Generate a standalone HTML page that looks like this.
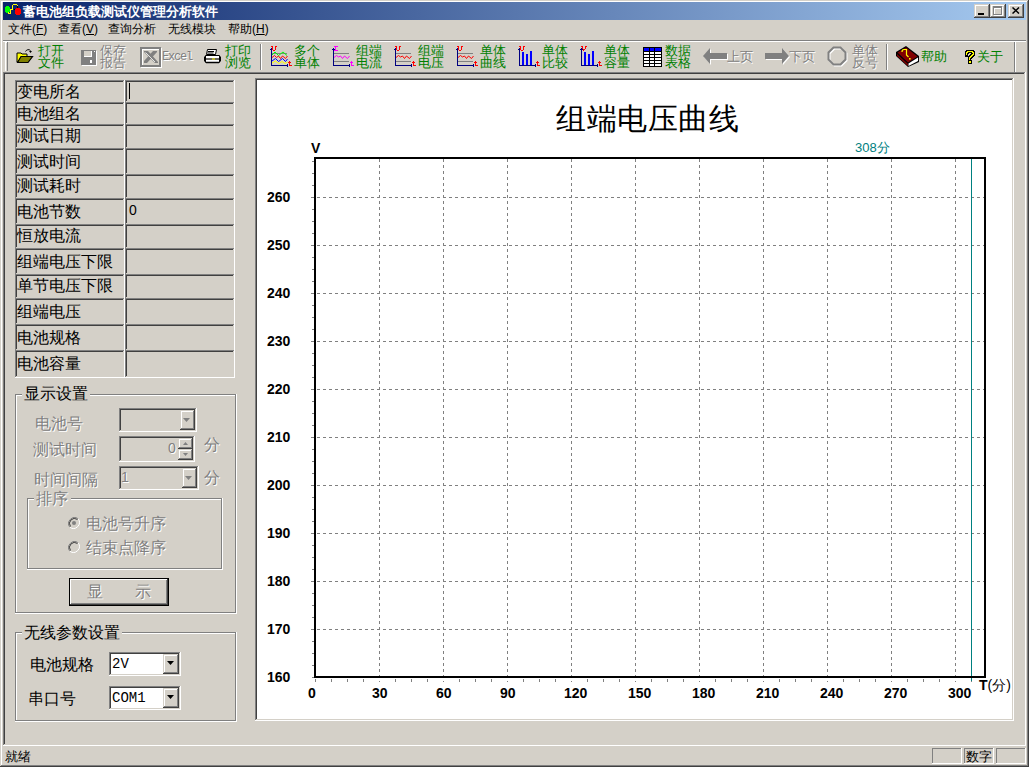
<!DOCTYPE html>
<html><head><meta charset="utf-8"><style>
*{box-sizing:border-box;margin:0;padding:0}
html,body{width:1030px;height:768px;overflow:hidden;background:#ffffff;font-family:"Liberation Sans",sans-serif;font-size:12px;color:#000}
.a{position:absolute}
.t{position:absolute;white-space:nowrap;line-height:1}
.g{color:#008000}
.dis{color:#808080;text-shadow:1px 1px 0 #fff}
.r{position:absolute}
</style></head><body>
<div class="r" style="left:0;top:0;width:1029px;height:767px;background:#d4d0c8"></div>
<div class="r" style="left:0px;top:0px;width:1028px;height:1px;background:#d4d0c8;"></div>
<div class="r" style="left:1px;top:1px;width:1026px;height:1px;background:#fff;"></div>
<div class="r" style="left:1px;top:1px;width:1px;height:764px;background:#fff;"></div>
<div class="r" style="left:1028px;top:0px;width:1px;height:767px;background:#404040;"></div>
<div class="r" style="left:1027px;top:1px;width:1px;height:765px;background:#808080;"></div>
<div class="r" style="left:0px;top:766px;width:1029px;height:1px;background:#404040;"></div>
<div class="r" style="left:1px;top:765px;width:1027px;height:1px;background:#808080;"></div>
<div class="r" style="left:3px;top:2px;width:1023px;height:18px;background:linear-gradient(to right,#0a246a,#a6caf0)"></div>
<svg class="a" style="left:0px;top:0px" width="24" height="20" viewBox="0 0 24 20" shape-rendering="crispEdges">
<rect x="6" y="6" width="3" height="7" fill="#00ff00"/><rect x="5" y="7" width="5" height="5" fill="#00ff00"/>
<path d="M7 13h1v1h3v-4h2v-5h4v3h1v-3h-1v-1h-4v1h-1v4h-2v4h-1v-1h-1z" fill="#ffff00"/>
<path d="M14 9h1v1h-1z" fill="#000"/><path d="M17 6h1v2h-1z" fill="#000"/>
<rect x="16" y="8" width="4" height="7" fill="#ff0000"/><rect x="15" y="9" width="6" height="5" fill="#ff0000"/>
</svg>
<div class="t " style="left:23px;top:5px;color:#fff;font-weight:bold;font-size:13px">蓄电池组负载测试仪管理分析软件</div>
<div class="r" style="left:974px;top:4px;width:16px;height:14px;background:#d4d0c8;"></div>
<div class="r" style="left:974px;top:4px;width:16px;height:1px;background:#d4d0c8;"></div>
<div class="r" style="left:974px;top:4px;width:1px;height:14px;background:#d4d0c8;"></div>
<div class="r" style="left:974px;top:17px;width:16px;height:1px;background:#404040;"></div>
<div class="r" style="left:989px;top:4px;width:1px;height:14px;background:#404040;"></div>
<div class="r" style="left:975px;top:5px;width:14px;height:1px;background:#fff;"></div>
<div class="r" style="left:975px;top:5px;width:1px;height:12px;background:#fff;"></div>
<div class="r" style="left:975px;top:16px;width:14px;height:1px;background:#808080;"></div>
<div class="r" style="left:988px;top:5px;width:1px;height:12px;background:#808080;"></div>
<div class="r" style="left:990px;top:4px;width:16px;height:14px;background:#d4d0c8;"></div>
<div class="r" style="left:990px;top:4px;width:16px;height:1px;background:#d4d0c8;"></div>
<div class="r" style="left:990px;top:4px;width:1px;height:14px;background:#d4d0c8;"></div>
<div class="r" style="left:990px;top:17px;width:16px;height:1px;background:#404040;"></div>
<div class="r" style="left:1005px;top:4px;width:1px;height:14px;background:#404040;"></div>
<div class="r" style="left:991px;top:5px;width:14px;height:1px;background:#fff;"></div>
<div class="r" style="left:991px;top:5px;width:1px;height:12px;background:#fff;"></div>
<div class="r" style="left:991px;top:16px;width:14px;height:1px;background:#808080;"></div>
<div class="r" style="left:1004px;top:5px;width:1px;height:12px;background:#808080;"></div>
<div class="r" style="left:1008px;top:4px;width:16px;height:14px;background:#d4d0c8;"></div>
<div class="r" style="left:1008px;top:4px;width:16px;height:1px;background:#d4d0c8;"></div>
<div class="r" style="left:1008px;top:4px;width:1px;height:14px;background:#d4d0c8;"></div>
<div class="r" style="left:1008px;top:17px;width:16px;height:1px;background:#404040;"></div>
<div class="r" style="left:1023px;top:4px;width:1px;height:14px;background:#404040;"></div>
<div class="r" style="left:1009px;top:5px;width:14px;height:1px;background:#fff;"></div>
<div class="r" style="left:1009px;top:5px;width:1px;height:12px;background:#fff;"></div>
<div class="r" style="left:1009px;top:16px;width:14px;height:1px;background:#808080;"></div>
<div class="r" style="left:1022px;top:5px;width:1px;height:12px;background:#808080;"></div>
<div class="r" style="left:978px;top:13px;width:6px;height:2px;background:#000;"></div>
<div class="r" style="left:994px;top:7px;width:9px;height:9px;border:1px solid #fff;border-top-width:2px"></div>
<div class="r" style="left:993px;top:6px;width:9px;height:9px;border:1px solid #808080;border-top-width:2px"></div>
<svg class="a" style="left:1012px;top:7px" width="8" height="7" viewBox="0 0 8 7"><path d="M0.5 0.5 L7 6.5 M7 0.5 L0.5 6.5" stroke="#000" stroke-width="1.5"/></svg>
<div class="t " style="left:8px;top:23px;">文件(<u>F</u>)</div>
<div class="t " style="left:58px;top:23px;">查看(<u>V</u>)</div>
<div class="t " style="left:108px;top:23px;">查询分析</div>
<div class="t " style="left:168px;top:23px;">无线模块</div>
<div class="t " style="left:228px;top:23px;">帮助(<u>H</u>)</div>
<div class="r" style="left:3px;top:40px;width:1023px;height:1px;background:#808080;"></div>
<div class="r" style="left:3px;top:41px;width:1023px;height:1px;background:#fff;"></div>
<div class="r" style="left:5px;top:42px;width:1px;height:29px;background:#fff;"></div>
<div class="r" style="left:7px;top:42px;width:1px;height:29px;background:#808080;"></div>
<div class="r" style="left:5px;top:42px;width:2px;height:1px;background:#fff;"></div>
<div class="r" style="left:1014px;top:42px;width:1px;height:30px;background:#808080;"></div>
<div class="r" style="left:1015px;top:42px;width:1px;height:30px;background:#fff;"></div>
<div class="r" style="left:260px;top:44px;width:1px;height:26px;background:#808080;"></div>
<div class="r" style="left:261px;top:44px;width:1px;height:26px;background:#fff;"></div>
<div class="r" style="left:886px;top:44px;width:1px;height:26px;background:#808080;"></div>
<div class="r" style="left:887px;top:44px;width:1px;height:26px;background:#fff;"></div>
<svg class="a" style="left:16px;top:48px" width="18" height="17" viewBox="0 0 18 17" >
<path d="M9.5 3.5 C10.5 1.5 13 1 14.5 2.5" stroke="#000" stroke-width="1" fill="none"/>
<path d="M13 3h3l-1.5 2z" fill="#000"/>
<path d="M1 5h4l1 1h5v3H5L2 14H1z" fill="#ffff00" stroke="#000" stroke-width="1" stroke-linejoin="miter"/>
<path d="M1.5 14.5 L5 8.5 H16.5 L12 14.5 Z" fill="#808000" stroke="#000" stroke-width="1.2"/>
</svg>
<div class="t g" style="left:38px;top:45px;font-size:13px;line-height:12px">打开<br>文件</div>
<svg class="a" style="left:80px;top:49px" width="17" height="17" viewBox="0 0 17 17" shape-rendering="crispEdges">
<rect x="2" y="2" width="15" height="15" fill="#fff"/>
<rect x="1" y="1" width="15" height="15" fill="#808080"/>
<rect x="4" y="2" width="8" height="6" fill="#fff"/>
<rect x="4" y="2" width="7" height="5" fill="#d4d0c8"/>
<rect x="14" y="2" width="1" height="1" fill="#fff"/>
<rect x="10" y="11" width="2" height="3" fill="#fff"/>
</svg>
<div class="t dis" style="left:100px;top:45px;font-size:13px;line-height:12px">保存<br>报告</div>
<svg class="a" style="left:139px;top:46px" width="24" height="23" viewBox="0 0 24 23" shape-rendering="geometricPrecision">
<rect x="2" y="2" width="21" height="20" fill="#fff"/>
<rect x="1" y="1" width="21" height="20" fill="#808080"/>
<rect x="3" y="3" width="17" height="16" fill="#fff"/>
<rect x="4" y="4" width="16" height="15" fill="#d4d0c8"/>
<path d="M5 5h4l10 11v1h-3L5 6z M5 17v-2l9-10h4v1L8 17z" fill="#808080"/>
<path d="M6.5 6.5 L16 16" stroke="#fff" stroke-width="0.8"/>
</svg>
<div class="t dis" style="left:162px;top:51px;font-size:12px;font-family:Liberation Mono,monospace;letter-spacing:-1.2px">Excel</div>
<svg class="a" style="left:203px;top:48px" width="20" height="18" viewBox="0 0 20 18" >
<path d="M4.5 1.5h9l-1 5h-9z" fill="#fff" stroke="#000"/>
<path d="M5 3.5h6M4.5 5h6" stroke="#000"/>
<path d="M2.5 7.5h14v7h-14z" fill="#fff" stroke="#000"/>
<path d="M1.5 8.5v5M17.5 8.5v5" stroke="#000"/>
<rect x="3" y="10" width="13" height="2" fill="#000"/>
<rect x="3" y="10.5" width="13" height="1" fill="#d4d0c8"/>
<rect x="9" y="10.5" width="3" height="1" fill="#ffff00"/>
<path d="M3 14.5h13" stroke="#000" stroke-width="1.5"/>
</svg>
<div class="t g" style="left:225px;top:45px;font-size:13px;line-height:12px">打印<br>浏览</div>
<svg class="a" style="left:266px;top:44px" width="30" height="26" viewBox="266 44 30 26"><g shape-rendering="crispEdges" fill="none"><path d="M271.5 48V65.5H288" stroke="#000080"/><path d="M270 49.5h3M287.5 64v3" stroke="#000080"/><path d="M271 46.5h2M275 46.5h2M272.5 47v3M275.5 47v3M273 50.5h2" stroke="#ff0000"/><path d="M289.5 61v5M288 62.5h3M289.5 65.5h2" stroke="#ff0000"/></g><path d="M272 53.5H287" stroke="#808080" shape-rendering="crispEdges"/><polyline points="272,55 275,52 278.5,55.5 283,52 287,55.5" stroke="#00ff00" stroke-width="1.0" fill="none"/><polyline points="272,57.5 274.5,55.5 276.5,57.5 278.5,56 280.5,58.5 282.5,56 285.5,58.5 287.5,56" stroke="#ff0000" stroke-width="1.0" fill="none"/><polyline points="272,61 275.5,58.5 278.5,61.5 282.5,58.5 285.5,61.5 287.5,59" stroke="#0000ff" stroke-width="1.0" fill="none"/><polyline points="272,63 275.5,61 279,63.5 282,61.5 285,63.5 287.5,62" stroke="#ffff00" stroke-width="1.0" fill="none"/></svg>
<div class="t g" style="left:294px;top:45px;font-size:13px;line-height:12px">多个<br>单体</div>
<svg class="a" style="left:328px;top:44px" width="30" height="26" viewBox="266 44 30 26"><g shape-rendering="crispEdges" fill="none"><path d="M271.5 48V65.5H288" stroke="#000080"/><path d="M270 49.5h3M287.5 64v3" stroke="#000080"/><path d="M272 46.5h4M273.5 47v4M272 50.5h4" stroke="#ff00ff"/><path d="M289.5 61v5M288 62.5h3M289.5 65.5h2" stroke="#ff00ff"/></g><path d="M272 53.5H287M272 61.5H287" stroke="#808080" shape-rendering="crispEdges"/><polyline points="272,57.5 274.5,55.5 276.5,57 278.5,56 280.5,58.5 282.5,56 285.5,58.5 287.5,56" stroke="#ff00ff" stroke-width="1.0" fill="none"/></svg>
<div class="t g" style="left:356px;top:45px;font-size:13px;line-height:12px">组端<br>电流</div>
<svg class="a" style="left:390px;top:44px" width="30" height="26" viewBox="266 44 30 26"><g shape-rendering="crispEdges" fill="none"><path d="M271.5 48V65.5H288" stroke="#000080"/><path d="M270 49.5h3M287.5 64v3" stroke="#000080"/><path d="M271 46.5h2M275 46.5h2M272.5 47v3M275.5 47v3M273 50.5h2" stroke="#ff0000"/><path d="M289.5 61v5M288 62.5h3M289.5 65.5h2" stroke="#ff0000"/></g><path d="M272 53.5H287M272 61.5H287" stroke="#808080" shape-rendering="crispEdges"/><polyline points="272,57.5 274.5,55.5 276.5,57 278.5,56 280.5,58.5 282.5,56 285.5,58.5 287.5,56" stroke="#ff0000" stroke-width="1.0" fill="none"/></svg>
<div class="t g" style="left:418px;top:45px;font-size:13px;line-height:12px">组端<br>电压</div>
<svg class="a" style="left:452px;top:44px" width="30" height="26" viewBox="266 44 30 26"><g shape-rendering="crispEdges" fill="none"><path d="M271.5 48V65.5H288" stroke="#000080"/><path d="M270 49.5h3M287.5 64v3" stroke="#000080"/><path d="M271 46.5h2M275 46.5h2M272.5 47v3M275.5 47v3M273 50.5h2" stroke="#ff0000"/><path d="M289.5 61v5M288 62.5h3M289.5 65.5h2" stroke="#ff0000"/></g><path d="M272 53.5H287M272 61.5H287" stroke="#808080" shape-rendering="crispEdges"/><polyline points="272,57.5 274.5,55.5 276.5,57 278.5,56 280.5,58.5 282.5,56 285.5,58.5 287.5,56" stroke="#ff0000" stroke-width="1.0" fill="none"/></svg>
<div class="t g" style="left:480px;top:45px;font-size:13px;line-height:12px">单体<br>曲线</div>
<svg class="a" style="left:514px;top:44px" width="30" height="26" viewBox="266 44 30 26"><g shape-rendering="crispEdges" fill="none"><path d="M271.5 48V65.5H288" stroke="#000080"/><path d="M270 49.5h3M287.5 64v3" stroke="#000080"/><path d="M271 46.5h2M275 46.5h2M272.5 47v3M275.5 47v3M273 50.5h2" stroke="#ff0000"/><path d="M289.5 61v5M288 62.5h3M289.5 65.5h2" stroke="#ff0000"/></g><g shape-rendering="crispEdges"><rect x="274" y="52" width="2" height="13" fill="#0000ff"/><rect x="278" y="54" width="2" height="11" fill="#0000ff"/><rect x="282" y="51" width="2" height="14" fill="#0000ff"/></g></svg>
<div class="t g" style="left:542px;top:45px;font-size:13px;line-height:12px">单体<br>比较</div>
<svg class="a" style="left:576px;top:44px" width="30" height="26" viewBox="266 44 30 26"><g shape-rendering="crispEdges" fill="none"><path d="M271.5 48V65.5H288" stroke="#000080"/><path d="M270 49.5h3M287.5 64v3" stroke="#000080"/><path d="M271 46.5h2M275 46.5h2M272.5 47v2M275.5 47v2M273 49.5h2M273.5 50v1" stroke="#ff0000"/><path d="M289.5 61v5M288 62.5h3M289.5 65.5h2" stroke="#ff0000"/></g><g shape-rendering="crispEdges"><rect x="274" y="52" width="2" height="13" fill="#0000ff"/><rect x="278" y="54" width="2" height="11" fill="#0000ff"/><rect x="282" y="51" width="2" height="14" fill="#0000ff"/></g></svg>
<div class="t g" style="left:604px;top:45px;font-size:13px;line-height:12px">单体<br>容量</div>
<svg class="a" style="left:643px;top:47px" width="19" height="20" viewBox="0 0 19 20" shape-rendering="crispEdges"><rect x="0" y="0" width="19" height="20" fill="#000"/><rect x="1" y="1" width="5" height="3" fill="#0000ff"/><rect x="7" y="1" width="4" height="3" fill="#0000ff"/><rect x="12" y="1" width="6" height="3" fill="#0000ff"/><rect x="1" y="5" width="5" height="2" fill="#fff"/><rect x="7" y="5" width="4" height="2" fill="#fff"/><rect x="12" y="5" width="6" height="2" fill="#fff"/><rect x="1" y="8" width="5" height="2" fill="#fff"/><rect x="7" y="8" width="4" height="2" fill="#fff"/><rect x="12" y="8" width="6" height="2" fill="#fff"/><rect x="1" y="11" width="5" height="2" fill="#fff"/><rect x="7" y="11" width="4" height="2" fill="#fff"/><rect x="12" y="11" width="6" height="2" fill="#fff"/><rect x="1" y="14" width="5" height="2" fill="#fff"/><rect x="7" y="14" width="4" height="2" fill="#fff"/><rect x="12" y="14" width="6" height="2" fill="#fff"/><rect x="1" y="17" width="5" height="2" fill="#fff"/><rect x="7" y="17" width="4" height="2" fill="#fff"/><rect x="12" y="17" width="6" height="2" fill="#fff"/></svg>
<div class="t g" style="left:665px;top:45px;font-size:13px;line-height:12px">数据<br>表格</div>
<svg class="a" style="left:702px;top:47px" width="27" height="19" viewBox="0 0 27 19" >
<path d="M9 2 L9 7 H26 V13 H9 V18 L2 10 Z" fill="#fff"/>
<path d="M8 1 L8 6 H25 V12 H8 V17 L1 9 Z" fill="#808080"/>
</svg>
<div class="t dis" style="left:727px;top:50px;font-size:13px">上页</div>
<svg class="a" style="left:764px;top:47px" width="27" height="19" viewBox="0 0 27 19" >
<path d="M19 2 L19 7 H2 V13 H19 V18 L26 10 Z" fill="#fff"/>
<path d="M18 1 L18 6 H1 V12 H18 V17 L25 9 Z" fill="#808080"/>
</svg>
<div class="t dis" style="left:789px;top:50px;font-size:13px">下页</div>
<svg class="a" style="left:827px;top:46px" width="22" height="22" viewBox="0 0 22 22" >
<path d="M7.5 2.5h7l5 5v7l-5 5h-7l-5-5v-7z" stroke="#fff" stroke-width="2" fill="none"/>
<path d="M6.5 1.5h7l5 5v7l-5 5h-7l-5-5v-7z" stroke="#808080" stroke-width="2" fill="none"/>
</svg>
<div class="t dis" style="left:852px;top:45px;font-size:13px;line-height:12px">单体<br>反号</div>
<svg class="a" style="left:895px;top:45px" width="25" height="23" viewBox="0 0 25 23" >
<path d="M1 7 L11 1 L24 11 L24 17 L13 22 L1 11 Z" fill="#000"/>
<path d="M2.5 7.5 L11 2.5 L22.5 11.5 L13 17.5 Z" fill="#800000"/>
<path d="M2 9 L13 19 L13 21 L2 11 Z" fill="#800000"/>
<path d="M13.5 18.5 L23 12.5 V16 L13.5 21 Z" fill="#fff"/>
<path d="M7 7 Q7 4.5 9 4.5 H11.5 V10 L13.5 12" stroke="#ffff00" stroke-width="1.2" fill="none"/>
<rect x="14" y="13" width="1.6" height="1.6" fill="#ffff00"/>
</svg>
<div class="t g" style="left:921px;top:50px;font-size:13px">帮助</div>
<svg class="a" style="left:960px;top:46px" width="20" height="20" viewBox="960 46 20 20" shape-rendering="crispEdges">
<path d="M966.5 55V52.5H967.5V51.5H972.5V52.5H973.5V54.5H972.5V55.5H971.5V56.5H970.5V57.5H969.5V60" stroke="#000" stroke-width="3" stroke-linecap="square" stroke-linejoin="miter" fill="none"/>
<rect x="968" y="60" width="4" height="4" fill="#000"/>
<path d="M966.5 55V52.5H967.5V51.5H972.5V52.5H973.5V54.5H972.5V55.5H971.5V56.5H970.5V57.5H969.5V60" stroke="#ffff00" stroke-width="1" fill="none"/>
<rect x="969" y="61" width="2" height="2" fill="#ffff00"/>
</svg>
<div class="t g" style="left:977px;top:50px;font-size:13px">关于</div>
<div class="r" style="left:3px;top:72px;width:1022px;height:1px;background:#808080;"></div>
<div class="r" style="left:3px;top:72px;width:1px;height:673px;background:#808080;"></div>
<div class="r" style="left:4px;top:73px;width:1020px;height:1px;background:#404040;"></div>
<div class="r" style="left:4px;top:73px;width:1px;height:671px;background:#404040;"></div>
<div class="r" style="left:3px;top:745px;width:1023px;height:1px;background:#fff;"></div>
<div class="r" style="left:1025px;top:72px;width:1px;height:674px;background:#fff;"></div>
<div class="r" style="left:15px;top:80px;width:110px;height:1px;background:#808080;"></div>
<div class="r" style="left:15px;top:80px;width:1px;height:23px;background:#808080;"></div>
<div class="r" style="left:15px;top:102px;width:110px;height:1px;background:#fff;"></div>
<div class="r" style="left:124px;top:80px;width:1px;height:23px;background:#fff;"></div>
<div class="r" style="left:16px;top:81px;width:108px;height:1px;background:#404040;"></div>
<div class="r" style="left:16px;top:81px;width:1px;height:21px;background:#404040;"></div>
<div class="r" style="left:16px;top:101px;width:108px;height:1px;background:#d4d0c8;"></div>
<div class="r" style="left:123px;top:81px;width:1px;height:21px;background:#d4d0c8;"></div>
<div class="r" style="left:125px;top:80px;width:110px;height:1px;background:#808080;"></div>
<div class="r" style="left:125px;top:80px;width:1px;height:23px;background:#808080;"></div>
<div class="r" style="left:125px;top:102px;width:110px;height:1px;background:#fff;"></div>
<div class="r" style="left:234px;top:80px;width:1px;height:23px;background:#fff;"></div>
<div class="r" style="left:126px;top:81px;width:108px;height:1px;background:#404040;"></div>
<div class="r" style="left:126px;top:81px;width:1px;height:21px;background:#404040;"></div>
<div class="r" style="left:126px;top:101px;width:108px;height:1px;background:#d4d0c8;"></div>
<div class="r" style="left:233px;top:81px;width:1px;height:21px;background:#d4d0c8;"></div>
<div class="r" style="left:15px;top:102px;width:110px;height:1px;background:#808080;"></div>
<div class="r" style="left:15px;top:102px;width:1px;height:23px;background:#808080;"></div>
<div class="r" style="left:15px;top:124px;width:110px;height:1px;background:#fff;"></div>
<div class="r" style="left:124px;top:102px;width:1px;height:23px;background:#fff;"></div>
<div class="r" style="left:16px;top:103px;width:108px;height:1px;background:#404040;"></div>
<div class="r" style="left:16px;top:103px;width:1px;height:21px;background:#404040;"></div>
<div class="r" style="left:16px;top:123px;width:108px;height:1px;background:#d4d0c8;"></div>
<div class="r" style="left:123px;top:103px;width:1px;height:21px;background:#d4d0c8;"></div>
<div class="r" style="left:125px;top:102px;width:110px;height:1px;background:#808080;"></div>
<div class="r" style="left:125px;top:102px;width:1px;height:23px;background:#808080;"></div>
<div class="r" style="left:125px;top:124px;width:110px;height:1px;background:#fff;"></div>
<div class="r" style="left:234px;top:102px;width:1px;height:23px;background:#fff;"></div>
<div class="r" style="left:126px;top:103px;width:108px;height:1px;background:#404040;"></div>
<div class="r" style="left:126px;top:103px;width:1px;height:21px;background:#404040;"></div>
<div class="r" style="left:126px;top:123px;width:108px;height:1px;background:#d4d0c8;"></div>
<div class="r" style="left:233px;top:103px;width:1px;height:21px;background:#d4d0c8;"></div>
<div class="r" style="left:15px;top:124px;width:110px;height:1px;background:#808080;"></div>
<div class="r" style="left:15px;top:124px;width:1px;height:25px;background:#808080;"></div>
<div class="r" style="left:15px;top:148px;width:110px;height:1px;background:#fff;"></div>
<div class="r" style="left:124px;top:124px;width:1px;height:25px;background:#fff;"></div>
<div class="r" style="left:16px;top:125px;width:108px;height:1px;background:#404040;"></div>
<div class="r" style="left:16px;top:125px;width:1px;height:23px;background:#404040;"></div>
<div class="r" style="left:16px;top:147px;width:108px;height:1px;background:#d4d0c8;"></div>
<div class="r" style="left:123px;top:125px;width:1px;height:23px;background:#d4d0c8;"></div>
<div class="r" style="left:125px;top:124px;width:110px;height:1px;background:#808080;"></div>
<div class="r" style="left:125px;top:124px;width:1px;height:25px;background:#808080;"></div>
<div class="r" style="left:125px;top:148px;width:110px;height:1px;background:#fff;"></div>
<div class="r" style="left:234px;top:124px;width:1px;height:25px;background:#fff;"></div>
<div class="r" style="left:126px;top:125px;width:108px;height:1px;background:#404040;"></div>
<div class="r" style="left:126px;top:125px;width:1px;height:23px;background:#404040;"></div>
<div class="r" style="left:126px;top:147px;width:108px;height:1px;background:#d4d0c8;"></div>
<div class="r" style="left:233px;top:125px;width:1px;height:23px;background:#d4d0c8;"></div>
<div class="r" style="left:15px;top:148px;width:110px;height:1px;background:#808080;"></div>
<div class="r" style="left:15px;top:148px;width:1px;height:27px;background:#808080;"></div>
<div class="r" style="left:15px;top:174px;width:110px;height:1px;background:#fff;"></div>
<div class="r" style="left:124px;top:148px;width:1px;height:27px;background:#fff;"></div>
<div class="r" style="left:16px;top:149px;width:108px;height:1px;background:#404040;"></div>
<div class="r" style="left:16px;top:149px;width:1px;height:25px;background:#404040;"></div>
<div class="r" style="left:16px;top:173px;width:108px;height:1px;background:#d4d0c8;"></div>
<div class="r" style="left:123px;top:149px;width:1px;height:25px;background:#d4d0c8;"></div>
<div class="r" style="left:125px;top:148px;width:110px;height:1px;background:#808080;"></div>
<div class="r" style="left:125px;top:148px;width:1px;height:27px;background:#808080;"></div>
<div class="r" style="left:125px;top:174px;width:110px;height:1px;background:#fff;"></div>
<div class="r" style="left:234px;top:148px;width:1px;height:27px;background:#fff;"></div>
<div class="r" style="left:126px;top:149px;width:108px;height:1px;background:#404040;"></div>
<div class="r" style="left:126px;top:149px;width:1px;height:25px;background:#404040;"></div>
<div class="r" style="left:126px;top:173px;width:108px;height:1px;background:#d4d0c8;"></div>
<div class="r" style="left:233px;top:149px;width:1px;height:25px;background:#d4d0c8;"></div>
<div class="r" style="left:15px;top:174px;width:110px;height:1px;background:#808080;"></div>
<div class="r" style="left:15px;top:174px;width:1px;height:25px;background:#808080;"></div>
<div class="r" style="left:15px;top:198px;width:110px;height:1px;background:#fff;"></div>
<div class="r" style="left:124px;top:174px;width:1px;height:25px;background:#fff;"></div>
<div class="r" style="left:16px;top:175px;width:108px;height:1px;background:#404040;"></div>
<div class="r" style="left:16px;top:175px;width:1px;height:23px;background:#404040;"></div>
<div class="r" style="left:16px;top:197px;width:108px;height:1px;background:#d4d0c8;"></div>
<div class="r" style="left:123px;top:175px;width:1px;height:23px;background:#d4d0c8;"></div>
<div class="r" style="left:125px;top:174px;width:110px;height:1px;background:#808080;"></div>
<div class="r" style="left:125px;top:174px;width:1px;height:25px;background:#808080;"></div>
<div class="r" style="left:125px;top:198px;width:110px;height:1px;background:#fff;"></div>
<div class="r" style="left:234px;top:174px;width:1px;height:25px;background:#fff;"></div>
<div class="r" style="left:126px;top:175px;width:108px;height:1px;background:#404040;"></div>
<div class="r" style="left:126px;top:175px;width:1px;height:23px;background:#404040;"></div>
<div class="r" style="left:126px;top:197px;width:108px;height:1px;background:#d4d0c8;"></div>
<div class="r" style="left:233px;top:175px;width:1px;height:23px;background:#d4d0c8;"></div>
<div class="r" style="left:15px;top:198px;width:110px;height:1px;background:#808080;"></div>
<div class="r" style="left:15px;top:198px;width:1px;height:27px;background:#808080;"></div>
<div class="r" style="left:15px;top:224px;width:110px;height:1px;background:#fff;"></div>
<div class="r" style="left:124px;top:198px;width:1px;height:27px;background:#fff;"></div>
<div class="r" style="left:16px;top:199px;width:108px;height:1px;background:#404040;"></div>
<div class="r" style="left:16px;top:199px;width:1px;height:25px;background:#404040;"></div>
<div class="r" style="left:16px;top:223px;width:108px;height:1px;background:#d4d0c8;"></div>
<div class="r" style="left:123px;top:199px;width:1px;height:25px;background:#d4d0c8;"></div>
<div class="r" style="left:125px;top:198px;width:110px;height:1px;background:#808080;"></div>
<div class="r" style="left:125px;top:198px;width:1px;height:27px;background:#808080;"></div>
<div class="r" style="left:125px;top:224px;width:110px;height:1px;background:#fff;"></div>
<div class="r" style="left:234px;top:198px;width:1px;height:27px;background:#fff;"></div>
<div class="r" style="left:126px;top:199px;width:108px;height:1px;background:#404040;"></div>
<div class="r" style="left:126px;top:199px;width:1px;height:25px;background:#404040;"></div>
<div class="r" style="left:126px;top:223px;width:108px;height:1px;background:#d4d0c8;"></div>
<div class="r" style="left:233px;top:199px;width:1px;height:25px;background:#d4d0c8;"></div>
<div class="r" style="left:15px;top:224px;width:110px;height:1px;background:#808080;"></div>
<div class="r" style="left:15px;top:224px;width:1px;height:25px;background:#808080;"></div>
<div class="r" style="left:15px;top:248px;width:110px;height:1px;background:#fff;"></div>
<div class="r" style="left:124px;top:224px;width:1px;height:25px;background:#fff;"></div>
<div class="r" style="left:16px;top:225px;width:108px;height:1px;background:#404040;"></div>
<div class="r" style="left:16px;top:225px;width:1px;height:23px;background:#404040;"></div>
<div class="r" style="left:16px;top:247px;width:108px;height:1px;background:#d4d0c8;"></div>
<div class="r" style="left:123px;top:225px;width:1px;height:23px;background:#d4d0c8;"></div>
<div class="r" style="left:125px;top:224px;width:110px;height:1px;background:#808080;"></div>
<div class="r" style="left:125px;top:224px;width:1px;height:25px;background:#808080;"></div>
<div class="r" style="left:125px;top:248px;width:110px;height:1px;background:#fff;"></div>
<div class="r" style="left:234px;top:224px;width:1px;height:25px;background:#fff;"></div>
<div class="r" style="left:126px;top:225px;width:108px;height:1px;background:#404040;"></div>
<div class="r" style="left:126px;top:225px;width:1px;height:23px;background:#404040;"></div>
<div class="r" style="left:126px;top:247px;width:108px;height:1px;background:#d4d0c8;"></div>
<div class="r" style="left:233px;top:225px;width:1px;height:23px;background:#d4d0c8;"></div>
<div class="r" style="left:15px;top:248px;width:110px;height:1px;background:#808080;"></div>
<div class="r" style="left:15px;top:248px;width:1px;height:27px;background:#808080;"></div>
<div class="r" style="left:15px;top:274px;width:110px;height:1px;background:#fff;"></div>
<div class="r" style="left:124px;top:248px;width:1px;height:27px;background:#fff;"></div>
<div class="r" style="left:16px;top:249px;width:108px;height:1px;background:#404040;"></div>
<div class="r" style="left:16px;top:249px;width:1px;height:25px;background:#404040;"></div>
<div class="r" style="left:16px;top:273px;width:108px;height:1px;background:#d4d0c8;"></div>
<div class="r" style="left:123px;top:249px;width:1px;height:25px;background:#d4d0c8;"></div>
<div class="r" style="left:125px;top:248px;width:110px;height:1px;background:#808080;"></div>
<div class="r" style="left:125px;top:248px;width:1px;height:27px;background:#808080;"></div>
<div class="r" style="left:125px;top:274px;width:110px;height:1px;background:#fff;"></div>
<div class="r" style="left:234px;top:248px;width:1px;height:27px;background:#fff;"></div>
<div class="r" style="left:126px;top:249px;width:108px;height:1px;background:#404040;"></div>
<div class="r" style="left:126px;top:249px;width:1px;height:25px;background:#404040;"></div>
<div class="r" style="left:126px;top:273px;width:108px;height:1px;background:#d4d0c8;"></div>
<div class="r" style="left:233px;top:249px;width:1px;height:25px;background:#d4d0c8;"></div>
<div class="r" style="left:15px;top:274px;width:110px;height:1px;background:#808080;"></div>
<div class="r" style="left:15px;top:274px;width:1px;height:25px;background:#808080;"></div>
<div class="r" style="left:15px;top:298px;width:110px;height:1px;background:#fff;"></div>
<div class="r" style="left:124px;top:274px;width:1px;height:25px;background:#fff;"></div>
<div class="r" style="left:16px;top:275px;width:108px;height:1px;background:#404040;"></div>
<div class="r" style="left:16px;top:275px;width:1px;height:23px;background:#404040;"></div>
<div class="r" style="left:16px;top:297px;width:108px;height:1px;background:#d4d0c8;"></div>
<div class="r" style="left:123px;top:275px;width:1px;height:23px;background:#d4d0c8;"></div>
<div class="r" style="left:125px;top:274px;width:110px;height:1px;background:#808080;"></div>
<div class="r" style="left:125px;top:274px;width:1px;height:25px;background:#808080;"></div>
<div class="r" style="left:125px;top:298px;width:110px;height:1px;background:#fff;"></div>
<div class="r" style="left:234px;top:274px;width:1px;height:25px;background:#fff;"></div>
<div class="r" style="left:126px;top:275px;width:108px;height:1px;background:#404040;"></div>
<div class="r" style="left:126px;top:275px;width:1px;height:23px;background:#404040;"></div>
<div class="r" style="left:126px;top:297px;width:108px;height:1px;background:#d4d0c8;"></div>
<div class="r" style="left:233px;top:275px;width:1px;height:23px;background:#d4d0c8;"></div>
<div class="r" style="left:15px;top:298px;width:110px;height:1px;background:#808080;"></div>
<div class="r" style="left:15px;top:298px;width:1px;height:27px;background:#808080;"></div>
<div class="r" style="left:15px;top:324px;width:110px;height:1px;background:#fff;"></div>
<div class="r" style="left:124px;top:298px;width:1px;height:27px;background:#fff;"></div>
<div class="r" style="left:16px;top:299px;width:108px;height:1px;background:#404040;"></div>
<div class="r" style="left:16px;top:299px;width:1px;height:25px;background:#404040;"></div>
<div class="r" style="left:16px;top:323px;width:108px;height:1px;background:#d4d0c8;"></div>
<div class="r" style="left:123px;top:299px;width:1px;height:25px;background:#d4d0c8;"></div>
<div class="r" style="left:125px;top:298px;width:110px;height:1px;background:#808080;"></div>
<div class="r" style="left:125px;top:298px;width:1px;height:27px;background:#808080;"></div>
<div class="r" style="left:125px;top:324px;width:110px;height:1px;background:#fff;"></div>
<div class="r" style="left:234px;top:298px;width:1px;height:27px;background:#fff;"></div>
<div class="r" style="left:126px;top:299px;width:108px;height:1px;background:#404040;"></div>
<div class="r" style="left:126px;top:299px;width:1px;height:25px;background:#404040;"></div>
<div class="r" style="left:126px;top:323px;width:108px;height:1px;background:#d4d0c8;"></div>
<div class="r" style="left:233px;top:299px;width:1px;height:25px;background:#d4d0c8;"></div>
<div class="r" style="left:15px;top:324px;width:110px;height:1px;background:#808080;"></div>
<div class="r" style="left:15px;top:324px;width:1px;height:27px;background:#808080;"></div>
<div class="r" style="left:15px;top:350px;width:110px;height:1px;background:#fff;"></div>
<div class="r" style="left:124px;top:324px;width:1px;height:27px;background:#fff;"></div>
<div class="r" style="left:16px;top:325px;width:108px;height:1px;background:#404040;"></div>
<div class="r" style="left:16px;top:325px;width:1px;height:25px;background:#404040;"></div>
<div class="r" style="left:16px;top:349px;width:108px;height:1px;background:#d4d0c8;"></div>
<div class="r" style="left:123px;top:325px;width:1px;height:25px;background:#d4d0c8;"></div>
<div class="r" style="left:125px;top:324px;width:110px;height:1px;background:#808080;"></div>
<div class="r" style="left:125px;top:324px;width:1px;height:27px;background:#808080;"></div>
<div class="r" style="left:125px;top:350px;width:110px;height:1px;background:#fff;"></div>
<div class="r" style="left:234px;top:324px;width:1px;height:27px;background:#fff;"></div>
<div class="r" style="left:126px;top:325px;width:108px;height:1px;background:#404040;"></div>
<div class="r" style="left:126px;top:325px;width:1px;height:25px;background:#404040;"></div>
<div class="r" style="left:126px;top:349px;width:108px;height:1px;background:#d4d0c8;"></div>
<div class="r" style="left:233px;top:325px;width:1px;height:25px;background:#d4d0c8;"></div>
<div class="r" style="left:15px;top:350px;width:110px;height:1px;background:#808080;"></div>
<div class="r" style="left:15px;top:350px;width:1px;height:28px;background:#808080;"></div>
<div class="r" style="left:15px;top:377px;width:110px;height:1px;background:#fff;"></div>
<div class="r" style="left:124px;top:350px;width:1px;height:28px;background:#fff;"></div>
<div class="r" style="left:16px;top:351px;width:108px;height:1px;background:#404040;"></div>
<div class="r" style="left:16px;top:351px;width:1px;height:26px;background:#404040;"></div>
<div class="r" style="left:16px;top:376px;width:108px;height:1px;background:#d4d0c8;"></div>
<div class="r" style="left:123px;top:351px;width:1px;height:26px;background:#d4d0c8;"></div>
<div class="r" style="left:125px;top:350px;width:110px;height:1px;background:#808080;"></div>
<div class="r" style="left:125px;top:350px;width:1px;height:28px;background:#808080;"></div>
<div class="r" style="left:125px;top:377px;width:110px;height:1px;background:#fff;"></div>
<div class="r" style="left:234px;top:350px;width:1px;height:28px;background:#fff;"></div>
<div class="r" style="left:126px;top:351px;width:108px;height:1px;background:#404040;"></div>
<div class="r" style="left:126px;top:351px;width:1px;height:26px;background:#404040;"></div>
<div class="r" style="left:126px;top:376px;width:108px;height:1px;background:#d4d0c8;"></div>
<div class="r" style="left:233px;top:351px;width:1px;height:26px;background:#d4d0c8;"></div>
<div class="t " style="left:17px;top:84px;font-size:16px">变电所名</div>
<div class="t " style="left:17px;top:106px;font-size:16px">电池组名</div>
<div class="t " style="left:17px;top:128px;font-size:16px">测试日期</div>
<div class="t " style="left:17px;top:154px;font-size:16px">测试时间</div>
<div class="t " style="left:17px;top:178px;font-size:16px">测试耗时</div>
<div class="t " style="left:17px;top:204px;font-size:16px">电池节数</div>
<div class="t " style="left:17px;top:228px;font-size:16px">恒放电流</div>
<div class="t " style="left:17px;top:254px;font-size:16px">组端电压下限</div>
<div class="t " style="left:17px;top:278px;font-size:16px">单节电压下限</div>
<div class="t " style="left:17px;top:304px;font-size:16px">组端电压</div>
<div class="t " style="left:17px;top:330px;font-size:16px">电池规格</div>
<div class="t " style="left:17px;top:356px;font-size:16px">电池容量</div>
<div class="r" style="left:129px;top:83px;width:1px;height:16px;background:#000;"></div>
<div class="t " style="left:129px;top:203px;font-size:14px">0</div>
<div class="r" style="left:15px;top:394px;width:7px;height:1px;background:#808080;"></div>
<div class="r" style="left:16px;top:395px;width:6px;height:1px;background:#fff;"></div>
<div class="r" style="left:90px;top:394px;width:146px;height:1px;background:#808080;"></div>
<div class="r" style="left:90px;top:395px;width:146px;height:1px;background:#fff;"></div>
<div class="r" style="left:15px;top:394px;width:1px;height:219px;background:#808080;"></div>
<div class="r" style="left:16px;top:395px;width:1px;height:218px;background:#fff;"></div>
<div class="r" style="left:235px;top:394px;width:1px;height:219px;background:#808080;"></div>
<div class="r" style="left:236px;top:394px;width:1px;height:220px;background:#fff;"></div>
<div class="r" style="left:15px;top:612px;width:221px;height:1px;background:#808080;"></div>
<div class="r" style="left:15px;top:613px;width:222px;height:1px;background:#fff;"></div>
<div class="t " style="left:24px;top:386px;font-size:16px">显示设置</div>
<div class="t dis" style="left:35px;top:416px;font-size:16px">电池号</div>
<div class="t dis" style="left:33px;top:442px;font-size:16px">测试时间</div>
<div class="t dis" style="left:34px;top:472px;font-size:16px">时间间隔</div>
<div class="t dis" style="left:204px;top:437px;font-size:16px">分</div>
<div class="t dis" style="left:204px;top:470px;font-size:16px">分</div>
<div class="r" style="left:119px;top:408px;width:78px;height:1px;background:#808080;"></div>
<div class="r" style="left:119px;top:408px;width:1px;height:24px;background:#808080;"></div>
<div class="r" style="left:119px;top:431px;width:78px;height:1px;background:#fff;"></div>
<div class="r" style="left:196px;top:408px;width:1px;height:24px;background:#fff;"></div>
<div class="r" style="left:120px;top:409px;width:76px;height:1px;background:#404040;"></div>
<div class="r" style="left:120px;top:409px;width:1px;height:22px;background:#404040;"></div>
<div class="r" style="left:120px;top:430px;width:76px;height:1px;background:#d4d0c8;"></div>
<div class="r" style="left:195px;top:409px;width:1px;height:22px;background:#d4d0c8;"></div>
<div class="r" style="left:180px;top:410px;width:15px;height:20px;background:#d4d0c8;"></div>
<div class="r" style="left:180px;top:410px;width:15px;height:1px;background:#d4d0c8;"></div>
<div class="r" style="left:180px;top:410px;width:1px;height:20px;background:#d4d0c8;"></div>
<div class="r" style="left:180px;top:429px;width:15px;height:1px;background:#404040;"></div>
<div class="r" style="left:194px;top:410px;width:1px;height:20px;background:#404040;"></div>
<div class="r" style="left:181px;top:411px;width:13px;height:1px;background:#fff;"></div>
<div class="r" style="left:181px;top:411px;width:1px;height:18px;background:#fff;"></div>
<div class="r" style="left:181px;top:428px;width:13px;height:1px;background:#808080;"></div>
<div class="r" style="left:193px;top:411px;width:1px;height:18px;background:#808080;"></div>
<svg class="a" style="left:183px;top:418px" width="8" height="5"><path d="M0 0h7l-3.5 4z" fill="#808080"/></svg>
<div class="r" style="left:119px;top:436px;width:76px;height:1px;background:#808080;"></div>
<div class="r" style="left:119px;top:436px;width:1px;height:26px;background:#808080;"></div>
<div class="r" style="left:119px;top:461px;width:76px;height:1px;background:#fff;"></div>
<div class="r" style="left:194px;top:436px;width:1px;height:26px;background:#fff;"></div>
<div class="r" style="left:120px;top:437px;width:74px;height:1px;background:#404040;"></div>
<div class="r" style="left:120px;top:437px;width:1px;height:24px;background:#404040;"></div>
<div class="r" style="left:120px;top:460px;width:74px;height:1px;background:#d4d0c8;"></div>
<div class="r" style="left:193px;top:437px;width:1px;height:24px;background:#d4d0c8;"></div>
<div class="r" style="left:178px;top:438px;width:15px;height:11px;background:#d4d0c8;"></div>
<div class="r" style="left:178px;top:438px;width:15px;height:1px;background:#d4d0c8;"></div>
<div class="r" style="left:178px;top:438px;width:1px;height:11px;background:#d4d0c8;"></div>
<div class="r" style="left:178px;top:448px;width:15px;height:1px;background:#404040;"></div>
<div class="r" style="left:192px;top:438px;width:1px;height:11px;background:#404040;"></div>
<div class="r" style="left:179px;top:439px;width:13px;height:1px;background:#fff;"></div>
<div class="r" style="left:179px;top:439px;width:1px;height:9px;background:#fff;"></div>
<div class="r" style="left:179px;top:447px;width:13px;height:1px;background:#808080;"></div>
<div class="r" style="left:191px;top:439px;width:1px;height:9px;background:#808080;"></div>
<div class="r" style="left:178px;top:449px;width:15px;height:11px;background:#d4d0c8;"></div>
<div class="r" style="left:178px;top:449px;width:15px;height:1px;background:#d4d0c8;"></div>
<div class="r" style="left:178px;top:449px;width:1px;height:11px;background:#d4d0c8;"></div>
<div class="r" style="left:178px;top:459px;width:15px;height:1px;background:#404040;"></div>
<div class="r" style="left:192px;top:449px;width:1px;height:11px;background:#404040;"></div>
<div class="r" style="left:179px;top:450px;width:13px;height:1px;background:#fff;"></div>
<div class="r" style="left:179px;top:450px;width:1px;height:9px;background:#fff;"></div>
<div class="r" style="left:179px;top:458px;width:13px;height:1px;background:#808080;"></div>
<div class="r" style="left:191px;top:450px;width:1px;height:9px;background:#808080;"></div>
<svg class="a" style="left:183px;top:442px" width="5" height="3"><path d="M2.5 0L5 3H0z" fill="#808080"/></svg>
<svg class="a" style="left:183px;top:453px" width="5" height="3"><path d="M0 0h5L2.5 3z" fill="#808080"/></svg>
<div class="t dis" style="left:168px;top:441px;font-size:14px">0</div>
<div class="r" style="left:119px;top:466px;width:80px;height:1px;background:#808080;"></div>
<div class="r" style="left:119px;top:466px;width:1px;height:24px;background:#808080;"></div>
<div class="r" style="left:119px;top:489px;width:80px;height:1px;background:#fff;"></div>
<div class="r" style="left:198px;top:466px;width:1px;height:24px;background:#fff;"></div>
<div class="r" style="left:120px;top:467px;width:78px;height:1px;background:#404040;"></div>
<div class="r" style="left:120px;top:467px;width:1px;height:22px;background:#404040;"></div>
<div class="r" style="left:120px;top:488px;width:78px;height:1px;background:#d4d0c8;"></div>
<div class="r" style="left:197px;top:467px;width:1px;height:22px;background:#d4d0c8;"></div>
<div class="r" style="left:182px;top:468px;width:15px;height:20px;background:#d4d0c8;"></div>
<div class="r" style="left:182px;top:468px;width:15px;height:1px;background:#d4d0c8;"></div>
<div class="r" style="left:182px;top:468px;width:1px;height:20px;background:#d4d0c8;"></div>
<div class="r" style="left:182px;top:487px;width:15px;height:1px;background:#404040;"></div>
<div class="r" style="left:196px;top:468px;width:1px;height:20px;background:#404040;"></div>
<div class="r" style="left:183px;top:469px;width:13px;height:1px;background:#fff;"></div>
<div class="r" style="left:183px;top:469px;width:1px;height:18px;background:#fff;"></div>
<div class="r" style="left:183px;top:486px;width:13px;height:1px;background:#808080;"></div>
<div class="r" style="left:195px;top:469px;width:1px;height:18px;background:#808080;"></div>
<svg class="a" style="left:185px;top:476px" width="8" height="5"><path d="M0 0h7l-3.5 4z" fill="#808080"/></svg>
<div class="t dis" style="left:121px;top:470px;font-size:14px">1</div>
<div class="r" style="left:27px;top:498px;width:7px;height:1px;background:#808080;"></div>
<div class="r" style="left:28px;top:499px;width:6px;height:1px;background:#fff;"></div>
<div class="r" style="left:71px;top:498px;width:151px;height:1px;background:#808080;"></div>
<div class="r" style="left:71px;top:499px;width:151px;height:1px;background:#fff;"></div>
<div class="r" style="left:27px;top:498px;width:1px;height:71px;background:#808080;"></div>
<div class="r" style="left:28px;top:499px;width:1px;height:70px;background:#fff;"></div>
<div class="r" style="left:221px;top:498px;width:1px;height:71px;background:#808080;"></div>
<div class="r" style="left:222px;top:498px;width:1px;height:72px;background:#fff;"></div>
<div class="r" style="left:27px;top:568px;width:195px;height:1px;background:#808080;"></div>
<div class="r" style="left:27px;top:569px;width:196px;height:1px;background:#fff;"></div>
<div class="t dis" style="left:36px;top:491px;font-size:16px">排序</div>
<svg class="a" style="left:68px;top:517px" width="12" height="12" viewBox="0 0 12 12">
<path d="M10.2 1.8A6 6 0 0 0 1.8 10.2" stroke="#808080" stroke-width="1" fill="none"/>
<path d="M9.5 2.5A5 5 0 0 0 2.5 9.5" stroke="#404040" stroke-width="1" fill="none"/>
<path d="M1.8 10.2A6 6 0 0 0 10.2 1.8" stroke="#fff" stroke-width="1" fill="none"/>
</svg>
<svg class="a" style="left:68px;top:541px" width="12" height="12" viewBox="0 0 12 12">
<path d="M10.2 1.8A6 6 0 0 0 1.8 10.2" stroke="#808080" stroke-width="1" fill="none"/>
<path d="M9.5 2.5A5 5 0 0 0 2.5 9.5" stroke="#404040" stroke-width="1" fill="none"/>
<path d="M1.8 10.2A6 6 0 0 0 10.2 1.8" stroke="#fff" stroke-width="1" fill="none"/>
</svg>
<div class="r" style="left:72px;top:521px;width:4px;height:4px;border-radius:2px;background:#808080"></div>
<div class="t dis" style="left:86px;top:516px;font-size:16px">电池号升序</div>
<div class="t dis" style="left:86px;top:540px;font-size:16px">结束点降序</div>
<div class="r" style="left:69px;top:578px;width:100px;height:28px;background:#000;"></div>
<div class="r" style="left:70px;top:579px;width:98px;height:26px;background:#d4d0c8;"></div>
<div class="r" style="left:70px;top:579px;width:97px;height:1px;background:#fff;"></div>
<div class="r" style="left:70px;top:579px;width:1px;height:25px;background:#fff;"></div>
<div class="r" style="left:70px;top:604px;width:98px;height:1px;background:#404040;"></div>
<div class="r" style="left:167px;top:579px;width:1px;height:26px;background:#404040;"></div>
<div class="r" style="left:71px;top:603px;width:96px;height:1px;background:#808080;"></div>
<div class="r" style="left:166px;top:580px;width:1px;height:24px;background:#808080;"></div>
<div class="t dis" style="left:87px;top:584px;font-size:16px">显</div>
<div class="t dis" style="left:135px;top:584px;font-size:16px">示</div>
<div class="r" style="left:15px;top:632px;width:7px;height:1px;background:#808080;"></div>
<div class="r" style="left:16px;top:633px;width:6px;height:1px;background:#fff;"></div>
<div class="r" style="left:122px;top:632px;width:114px;height:1px;background:#808080;"></div>
<div class="r" style="left:122px;top:633px;width:114px;height:1px;background:#fff;"></div>
<div class="r" style="left:15px;top:632px;width:1px;height:89px;background:#808080;"></div>
<div class="r" style="left:16px;top:633px;width:1px;height:88px;background:#fff;"></div>
<div class="r" style="left:235px;top:632px;width:1px;height:89px;background:#808080;"></div>
<div class="r" style="left:236px;top:632px;width:1px;height:90px;background:#fff;"></div>
<div class="r" style="left:15px;top:720px;width:221px;height:1px;background:#808080;"></div>
<div class="r" style="left:15px;top:721px;width:222px;height:1px;background:#fff;"></div>
<div class="t " style="left:24px;top:625px;font-size:16px">无线参数设置</div>
<div class="t " style="left:30px;top:657px;font-size:16px">电池规格</div>
<div class="t " style="left:28px;top:691px;font-size:16px">串口号</div>
<div class="r" style="left:109px;top:652px;width:72px;height:24px;background:#fff;"></div>
<div class="r" style="left:109px;top:652px;width:72px;height:1px;background:#808080;"></div>
<div class="r" style="left:109px;top:652px;width:1px;height:24px;background:#808080;"></div>
<div class="r" style="left:109px;top:675px;width:72px;height:1px;background:#fff;"></div>
<div class="r" style="left:180px;top:652px;width:1px;height:24px;background:#fff;"></div>
<div class="r" style="left:110px;top:653px;width:70px;height:1px;background:#404040;"></div>
<div class="r" style="left:110px;top:653px;width:1px;height:22px;background:#404040;"></div>
<div class="r" style="left:110px;top:674px;width:70px;height:1px;background:#d4d0c8;"></div>
<div class="r" style="left:179px;top:653px;width:1px;height:22px;background:#d4d0c8;"></div>
<div class="r" style="left:163px;top:654px;width:16px;height:20px;background:#d4d0c8;"></div>
<div class="r" style="left:163px;top:654px;width:16px;height:1px;background:#d4d0c8;"></div>
<div class="r" style="left:163px;top:654px;width:1px;height:20px;background:#d4d0c8;"></div>
<div class="r" style="left:163px;top:673px;width:16px;height:1px;background:#404040;"></div>
<div class="r" style="left:178px;top:654px;width:1px;height:20px;background:#404040;"></div>
<div class="r" style="left:164px;top:655px;width:14px;height:1px;background:#fff;"></div>
<div class="r" style="left:164px;top:655px;width:1px;height:18px;background:#fff;"></div>
<div class="r" style="left:164px;top:672px;width:14px;height:1px;background:#808080;"></div>
<div class="r" style="left:177px;top:655px;width:1px;height:18px;background:#808080;"></div>
<svg class="a" style="left:167px;top:661px" width="8" height="5"><path d="M0 0h7l-3.5 4z" fill="#000"/></svg>
<div class="t " style="left:112px;top:657px;font-size:14px;font-family:Liberation Mono,monospace">2V</div>
<div class="r" style="left:109px;top:686px;width:72px;height:24px;background:#fff;"></div>
<div class="r" style="left:109px;top:686px;width:72px;height:1px;background:#808080;"></div>
<div class="r" style="left:109px;top:686px;width:1px;height:24px;background:#808080;"></div>
<div class="r" style="left:109px;top:709px;width:72px;height:1px;background:#fff;"></div>
<div class="r" style="left:180px;top:686px;width:1px;height:24px;background:#fff;"></div>
<div class="r" style="left:110px;top:687px;width:70px;height:1px;background:#404040;"></div>
<div class="r" style="left:110px;top:687px;width:1px;height:22px;background:#404040;"></div>
<div class="r" style="left:110px;top:708px;width:70px;height:1px;background:#d4d0c8;"></div>
<div class="r" style="left:179px;top:687px;width:1px;height:22px;background:#d4d0c8;"></div>
<div class="r" style="left:163px;top:688px;width:16px;height:20px;background:#d4d0c8;"></div>
<div class="r" style="left:163px;top:688px;width:16px;height:1px;background:#d4d0c8;"></div>
<div class="r" style="left:163px;top:688px;width:1px;height:20px;background:#d4d0c8;"></div>
<div class="r" style="left:163px;top:707px;width:16px;height:1px;background:#404040;"></div>
<div class="r" style="left:178px;top:688px;width:1px;height:20px;background:#404040;"></div>
<div class="r" style="left:164px;top:689px;width:14px;height:1px;background:#fff;"></div>
<div class="r" style="left:164px;top:689px;width:1px;height:18px;background:#fff;"></div>
<div class="r" style="left:164px;top:706px;width:14px;height:1px;background:#808080;"></div>
<div class="r" style="left:177px;top:689px;width:1px;height:18px;background:#808080;"></div>
<svg class="a" style="left:167px;top:695px" width="8" height="5"><path d="M0 0h7l-3.5 4z" fill="#000"/></svg>
<div class="t " style="left:112px;top:691px;font-size:14px;font-family:Liberation Mono,monospace">COM1</div>
<div class="r" style="left:255px;top:78px;width:759px;height:643px;background:#fff;"></div>
<div class="r" style="left:255px;top:78px;width:759px;height:1px;background:#808080;"></div>
<div class="r" style="left:255px;top:78px;width:1px;height:643px;background:#808080;"></div>
<div class="r" style="left:255px;top:720px;width:759px;height:1px;background:#fff;"></div>
<div class="r" style="left:1013px;top:78px;width:1px;height:643px;background:#fff;"></div>
<div class="r" style="left:256px;top:79px;width:757px;height:1px;background:#404040;"></div>
<div class="r" style="left:256px;top:79px;width:1px;height:641px;background:#404040;"></div>
<div class="r" style="left:256px;top:719px;width:757px;height:1px;background:#d4d0c8;"></div>
<div class="r" style="left:1012px;top:79px;width:1px;height:641px;background:#d4d0c8;"></div>
<div class="r" style="left:257px;top:80px;width:755px;height:639px;background:#fff;"></div>
<svg class="a" style="left:0;top:0" width="1030" height="768" shape-rendering="crispEdges"><path d="M311 197.5H984" stroke="#808080" stroke-dasharray="3 3"/><path d="M311 245.5H984" stroke="#808080" stroke-dasharray="3 3"/><path d="M311 293.5H984" stroke="#808080" stroke-dasharray="3 3"/><path d="M311 341.5H984" stroke="#808080" stroke-dasharray="3 3"/><path d="M311 389.5H984" stroke="#808080" stroke-dasharray="3 3"/><path d="M311 437.5H984" stroke="#808080" stroke-dasharray="3 3"/><path d="M311 485.5H984" stroke="#808080" stroke-dasharray="3 3"/><path d="M311 533.5H984" stroke="#808080" stroke-dasharray="3 3"/><path d="M311 581.5H984" stroke="#808080" stroke-dasharray="3 3"/><path d="M311 629.5H984" stroke="#808080" stroke-dasharray="3 3"/><path d="M379.5 159V682" stroke="#808080" stroke-dasharray="3 3"/><path d="M443.5 159V682" stroke="#808080" stroke-dasharray="3 3"/><path d="M507.5 159V682" stroke="#808080" stroke-dasharray="3 3"/><path d="M571.5 159V682" stroke="#808080" stroke-dasharray="3 3"/><path d="M635.5 159V682" stroke="#808080" stroke-dasharray="3 3"/><path d="M699.5 159V682" stroke="#808080" stroke-dasharray="3 3"/><path d="M763.5 159V682" stroke="#808080" stroke-dasharray="3 3"/><path d="M827.5 159V682" stroke="#808080" stroke-dasharray="3 3"/><path d="M891.5 159V682" stroke="#808080" stroke-dasharray="3 3"/><path d="M955.5 159V682" stroke="#808080" stroke-dasharray="3 3"/><path d="M312 161.5H314" stroke="#808080"/><path d="M312 173.5H314" stroke="#808080"/><path d="M312 185.5H314" stroke="#808080"/><path d="M312 209.5H314" stroke="#808080"/><path d="M312 221.5H314" stroke="#808080"/><path d="M312 233.5H314" stroke="#808080"/><path d="M312 257.5H314" stroke="#808080"/><path d="M312 269.5H314" stroke="#808080"/><path d="M312 281.5H314" stroke="#808080"/><path d="M312 305.5H314" stroke="#808080"/><path d="M312 317.5H314" stroke="#808080"/><path d="M312 329.5H314" stroke="#808080"/><path d="M312 353.5H314" stroke="#808080"/><path d="M312 365.5H314" stroke="#808080"/><path d="M312 377.5H314" stroke="#808080"/><path d="M312 401.5H314" stroke="#808080"/><path d="M312 413.5H314" stroke="#808080"/><path d="M312 425.5H314" stroke="#808080"/><path d="M312 449.5H314" stroke="#808080"/><path d="M312 461.5H314" stroke="#808080"/><path d="M312 473.5H314" stroke="#808080"/><path d="M312 497.5H314" stroke="#808080"/><path d="M312 509.5H314" stroke="#808080"/><path d="M312 521.5H314" stroke="#808080"/><path d="M312 545.5H314" stroke="#808080"/><path d="M312 557.5H314" stroke="#808080"/><path d="M312 569.5H314" stroke="#808080"/><path d="M312 593.5H314" stroke="#808080"/><path d="M312 605.5H314" stroke="#808080"/><path d="M312 617.5H314" stroke="#808080"/><path d="M312 641.5H314" stroke="#808080"/><path d="M312 653.5H314" stroke="#808080"/><path d="M312 665.5H314" stroke="#808080"/><path d="M312 677.5H314" stroke="#808080"/><path d="M315.5 679V682" stroke="#808080"/><path d="M331.5 679V682" stroke="#808080"/><path d="M347.5 679V682" stroke="#808080"/><path d="M363.5 679V682" stroke="#808080"/><path d="M395.5 679V682" stroke="#808080"/><path d="M411.5 679V682" stroke="#808080"/><path d="M427.5 679V682" stroke="#808080"/><path d="M459.5 679V682" stroke="#808080"/><path d="M475.5 679V682" stroke="#808080"/><path d="M491.5 679V682" stroke="#808080"/><path d="M523.5 679V682" stroke="#808080"/><path d="M539.5 679V682" stroke="#808080"/><path d="M555.5 679V682" stroke="#808080"/><path d="M587.5 679V682" stroke="#808080"/><path d="M603.5 679V682" stroke="#808080"/><path d="M619.5 679V682" stroke="#808080"/><path d="M651.5 679V682" stroke="#808080"/><path d="M667.5 679V682" stroke="#808080"/><path d="M683.5 679V682" stroke="#808080"/><path d="M715.5 679V682" stroke="#808080"/><path d="M731.5 679V682" stroke="#808080"/><path d="M747.5 679V682" stroke="#808080"/><path d="M779.5 679V682" stroke="#808080"/><path d="M795.5 679V682" stroke="#808080"/><path d="M811.5 679V682" stroke="#808080"/><path d="M843.5 679V682" stroke="#808080"/><path d="M859.5 679V682" stroke="#808080"/><path d="M875.5 679V682" stroke="#808080"/><path d="M907.5 679V682" stroke="#808080"/><path d="M923.5 679V682" stroke="#808080"/><path d="M939.5 679V682" stroke="#808080"/><path d="M971.5 679V682" stroke="#808080"/><path d="M971.5 159V681" stroke="#008080"/><path d="M315 158V677H985V158Z" stroke="#000" stroke-width="2" fill="none"/></svg>
<div class="t " style="left:556px;top:104px;font-size:30px;letter-spacing:0.5px;font-weight:500;font-family:Liberation Serif,serif">组端电压曲线</div>
<div class="t " style="left:311px;top:141px;font-size:14px;font-weight:bold">V</div>
<div class="t " style="left:855px;top:141px;font-size:13px;color:#008080">308分</div>
<div class="t " style="left:267px;top:190px;font-size:14px;font-weight:bold">260</div>
<div class="t " style="left:267px;top:238px;font-size:14px;font-weight:bold">250</div>
<div class="t " style="left:267px;top:286px;font-size:14px;font-weight:bold">240</div>
<div class="t " style="left:267px;top:334px;font-size:14px;font-weight:bold">230</div>
<div class="t " style="left:267px;top:382px;font-size:14px;font-weight:bold">220</div>
<div class="t " style="left:267px;top:430px;font-size:14px;font-weight:bold">210</div>
<div class="t " style="left:267px;top:478px;font-size:14px;font-weight:bold">200</div>
<div class="t " style="left:267px;top:526px;font-size:14px;font-weight:bold">190</div>
<div class="t " style="left:267px;top:574px;font-size:14px;font-weight:bold">180</div>
<div class="t " style="left:267px;top:622px;font-size:14px;font-weight:bold">170</div>
<div class="t " style="left:267px;top:670px;font-size:14px;font-weight:bold">160</div>
<div class="t " style="left:308px;top:686px;font-size:14px;font-weight:bold">0</div>
<div class="t " style="left:372px;top:686px;font-size:14px;font-weight:bold">30</div>
<div class="t " style="left:436px;top:686px;font-size:14px;font-weight:bold">60</div>
<div class="t " style="left:500px;top:686px;font-size:14px;font-weight:bold">90</div>
<div class="t " style="left:564px;top:686px;font-size:14px;font-weight:bold">120</div>
<div class="t " style="left:628px;top:686px;font-size:14px;font-weight:bold">150</div>
<div class="t " style="left:692px;top:686px;font-size:14px;font-weight:bold">180</div>
<div class="t " style="left:756px;top:686px;font-size:14px;font-weight:bold">210</div>
<div class="t " style="left:820px;top:686px;font-size:14px;font-weight:bold">240</div>
<div class="t " style="left:884px;top:686px;font-size:14px;font-weight:bold">270</div>
<div class="t " style="left:948px;top:686px;font-size:14px;font-weight:bold">300</div>
<div class="t" style="left:979px;top:678px;font-size:14px"><b>T</b>(分)</div>
<div class="t " style="left:5px;top:750px;font-size:13px">就绪</div>
<div class="r" style="left:932px;top:748px;width:30px;height:1px;background:#808080;"></div>
<div class="r" style="left:932px;top:748px;width:1px;height:16px;background:#808080;"></div>
<div class="r" style="left:932px;top:763px;width:30px;height:1px;background:#fff;"></div>
<div class="r" style="left:961px;top:748px;width:1px;height:16px;background:#fff;"></div>
<div class="r" style="left:964px;top:748px;width:30px;height:1px;background:#808080;"></div>
<div class="r" style="left:964px;top:748px;width:1px;height:16px;background:#808080;"></div>
<div class="r" style="left:964px;top:763px;width:30px;height:1px;background:#fff;"></div>
<div class="r" style="left:993px;top:748px;width:1px;height:16px;background:#fff;"></div>
<div class="r" style="left:996px;top:748px;width:30px;height:1px;background:#808080;"></div>
<div class="r" style="left:996px;top:748px;width:1px;height:16px;background:#808080;"></div>
<div class="r" style="left:996px;top:763px;width:30px;height:1px;background:#fff;"></div>
<div class="r" style="left:1025px;top:748px;width:1px;height:16px;background:#fff;"></div>
<div class="t " style="left:966px;top:750px;font-size:13px">数字</div>
</body></html>
